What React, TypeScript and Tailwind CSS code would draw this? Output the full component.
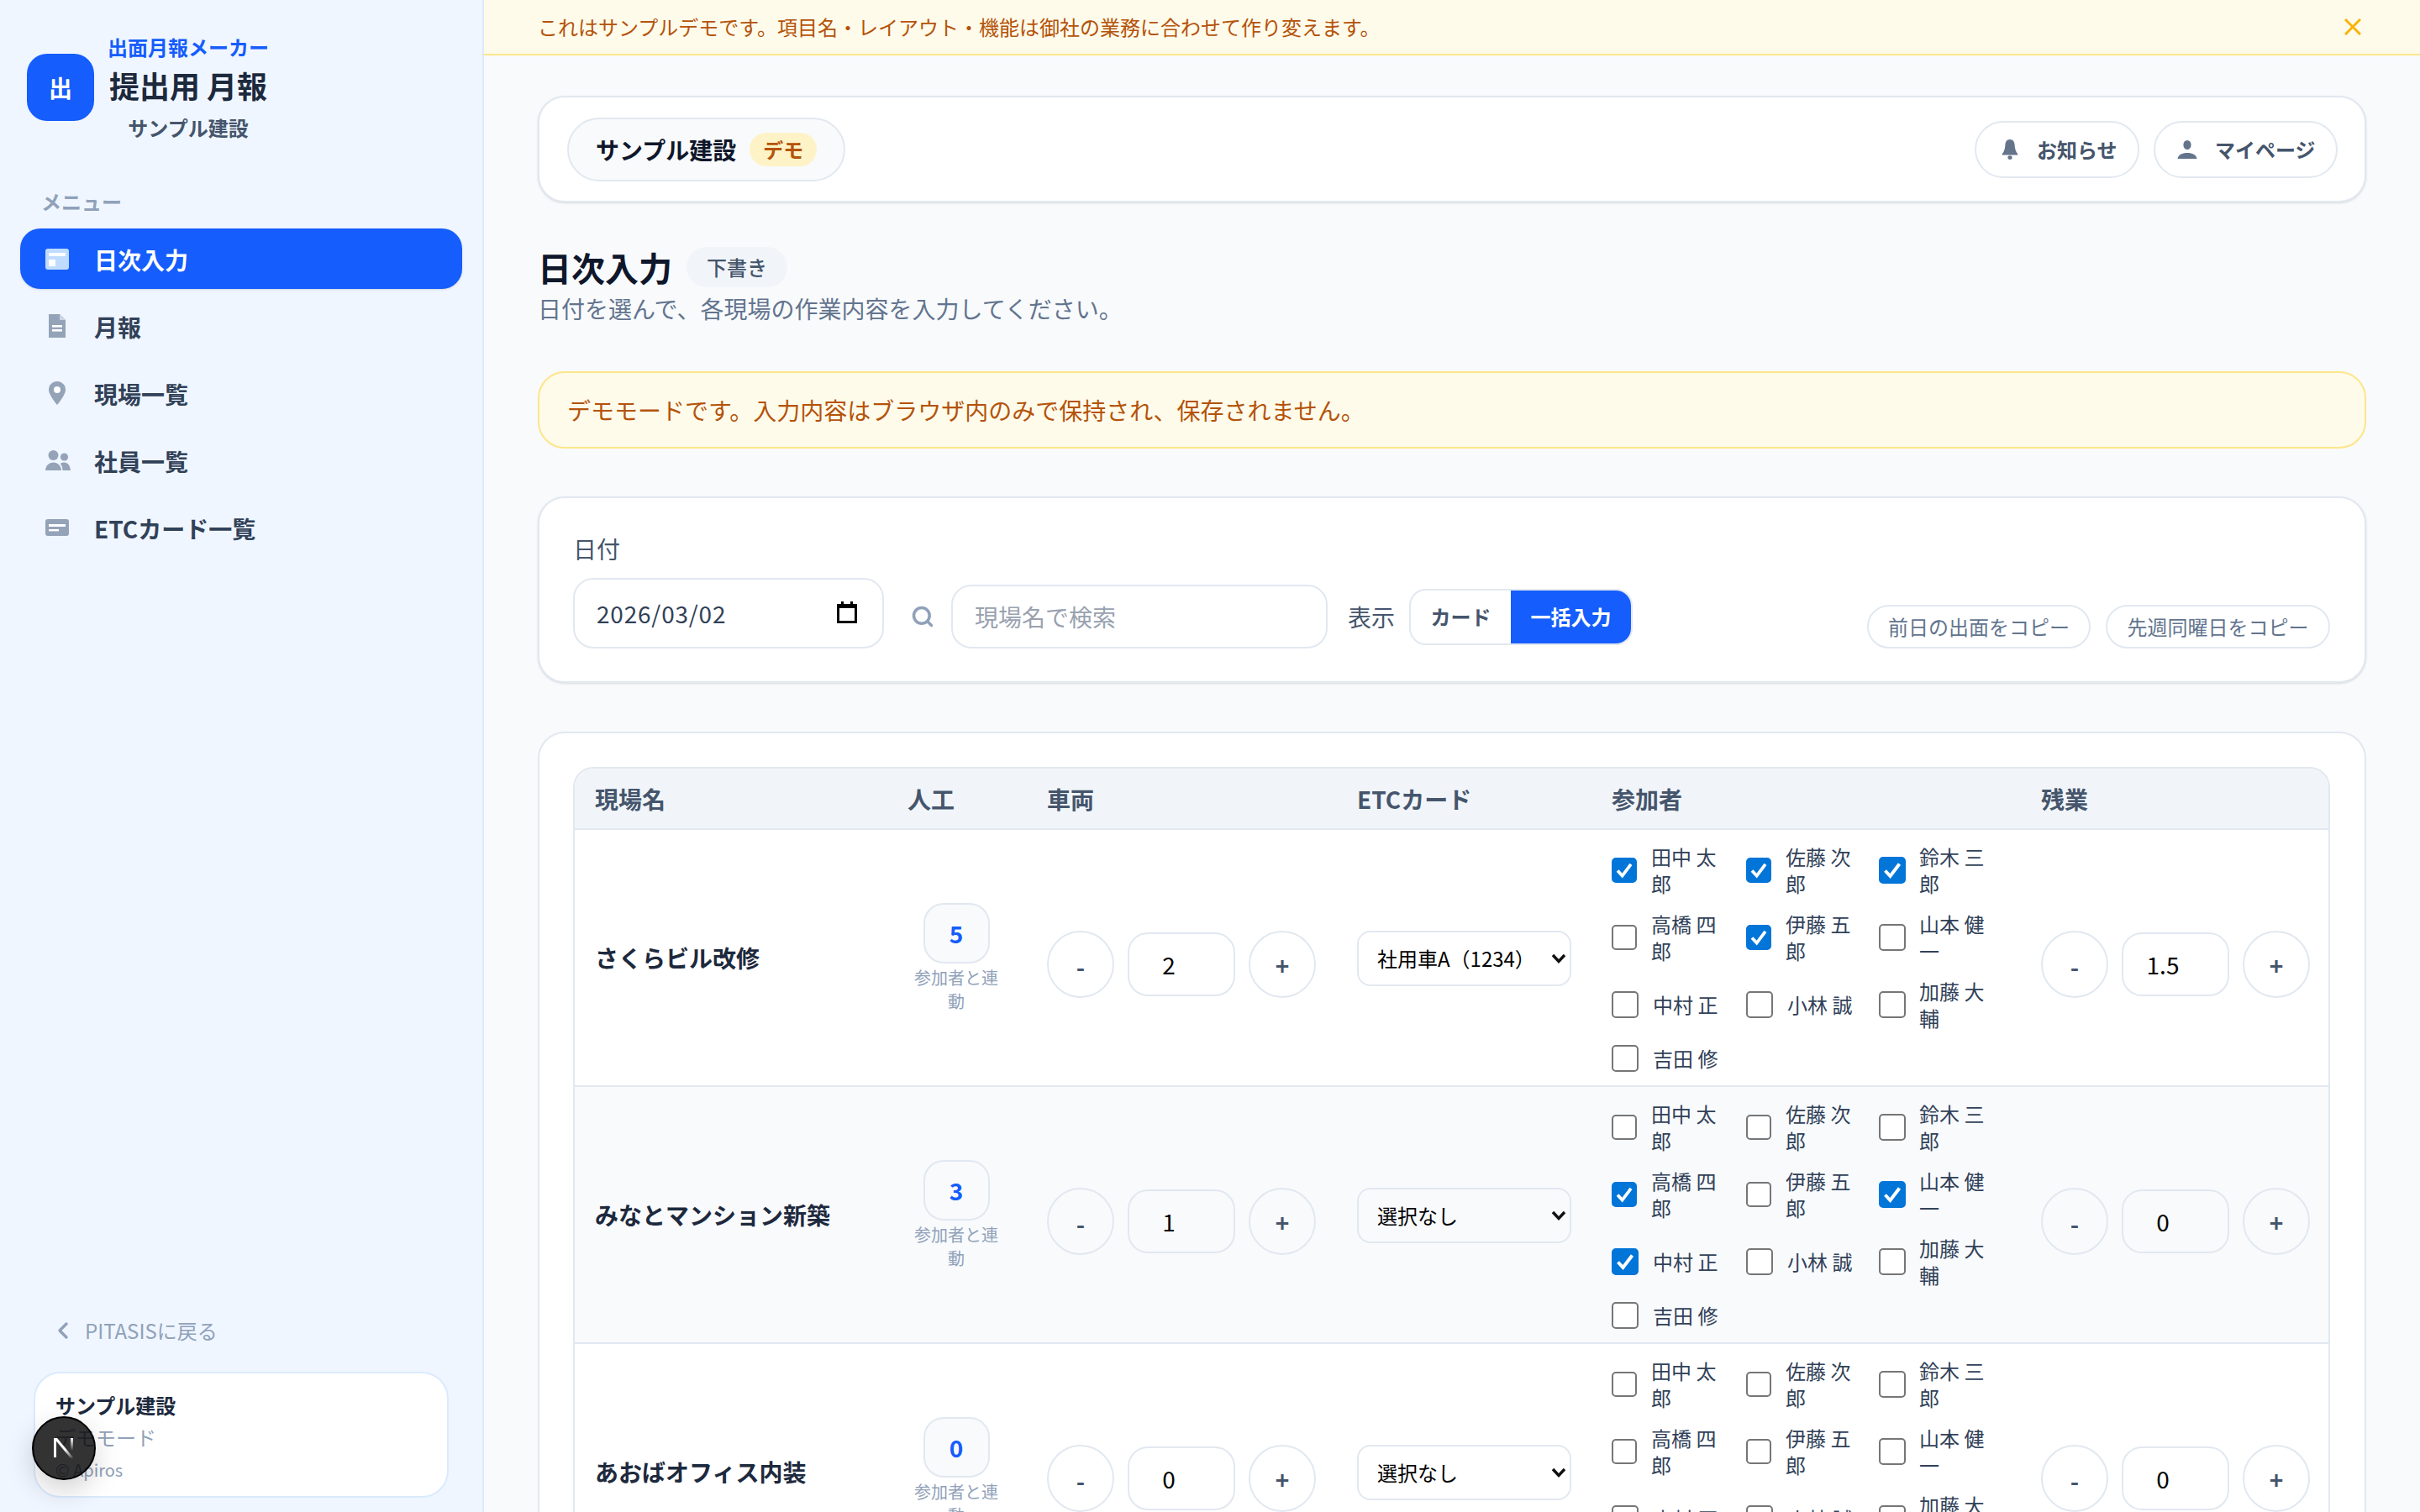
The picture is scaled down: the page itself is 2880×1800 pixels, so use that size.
import { ChevronLeft, Search } from "lucide-react";

const employees = [
  "田中 太郎",
  "佐藤 次郎",
  "鈴木 三郎",
  "高橋 四郎",
  "伊藤 五郎",
  "山本 健一",
  "中村 正",
  "小林 誠",
  "加藤 大輔",
  "吉田 修",
];

const sites = [
  { name: "さくらビル改修", workers: 5, vehicles: "2", etc: "社用車A（1234）", checked: [0, 1, 2, 4], overtime: "1.5" },
  { name: "みなとマンション新築", workers: 3, vehicles: "1", etc: "選択なし", checked: [3, 5, 6], overtime: "0" },
  { name: "あおばオフィス内装", workers: 0, vehicles: "0", etc: "選択なし", checked: [], overtime: "0" },
];

const CalendarNavIcon = () => (
  <svg width="28" height="25" viewBox="0 0 28 25" className="shrink-0">
    <rect width="28" height="25" rx="3" fill="#bfdbfe" />
    <rect x="4" y="5" width="20" height="4" fill="#ffffff" />
    <rect x="4" y="13" width="8" height="8" fill="#ffffff" />
  </svg>
);

const DocIcon = () => (
  <svg width="28" height="28" viewBox="0 0 28 28" className="shrink-0">
    <path d="M4 0H17L24 7V28H4Z" fill="#94a3b8" />
    <path d="M17 0V7H24Z" fill="#cbd5e1" />
    <rect x="8" y="13" width="12" height="2.6" fill="#ffffff" />
    <rect x="8" y="18" width="12" height="2.6" fill="#ffffff" />
  </svg>
);

const PinIcon = () => (
  <svg width="28" height="28" viewBox="0 0 28 28" className="shrink-0">
    <path d="M14 0C8.3 0 4 4.4 4 10C4 16.5 14 28 14 28C14 28 24 16.5 24 10C24 4.4 19.7 0 14 0Z" fill="#94a3b8" />
    <circle cx="14" cy="10" r="4" fill="#ffffff" />
  </svg>
);

const UsersIcon = () => (
  <svg width="30" height="24" viewBox="0 0 30 24" className="shrink-0">
    <circle cx="9.5" cy="6" r="6" fill="#94a3b8" />
    <circle cx="22.5" cy="8" r="4.6" fill="#94a3b8" />
    <path d="M0 24C0.6 18 4.5 14.5 9.5 14.5C14.5 14.5 18.4 18 19 24Z" fill="#94a3b8" />
    <path d="M20.5 24C20.3 20.6 19.4 17.8 17.8 15.8C19.1 15 20.7 14.6 22.4 14.6C26.6 14.6 29.4 18 30 24Z" fill="#94a3b8" />
  </svg>
);

const CardIcon = () => (
  <svg width="28" height="20" viewBox="0 0 28 20" className="shrink-0">
    <rect width="28" height="20" rx="3" fill="#94a3b8" />
    <rect x="4" y="6" width="20" height="3" fill="#ffffff" />
    <rect x="4" y="12" width="12" height="2.4" fill="#ffffff" />
  </svg>
);

const BellIcon = () => (
  <svg width="20" height="24" viewBox="0 0 20 24" className="shrink-0">
    <path d="M10 0C13.6 0 15.4 2.8 15.6 6.4C15.8 10.6 16.6 14 19.4 17.6V18.6H0.6V17.6C3.4 14 4.2 10.6 4.4 6.4C4.6 2.8 6.4 0 10 0Z" fill="#64748b" />
    <ellipse cx="10" cy="21.6" rx="2.6" ry="2.4" fill="#64748b" />
  </svg>
);

const PersonIcon = () => (
  <svg width="24" height="22" viewBox="0 0 24 22" className="shrink-0">
    <ellipse cx="12" cy="5.5" rx="4.6" ry="5.5" fill="#64748b" />
    <path d="M0.5 22C1 17.5 6 15 12 15C18 15 23 17.5 23.5 22Z" fill="#64748b" />
  </svg>
);

const navItems = [
  { label: "日次入力", icon: <CalendarNavIcon />, active: true },
  { label: "月報", icon: <DocIcon />, active: false },
  { label: "現場一覧", icon: <PinIcon />, active: false },
  { label: "社員一覧", icon: <UsersIcon />, active: false },
  { label: "ETCカード一覧", icon: <CardIcon />, active: false },
];

const Stepper = ({ value }: { value: string }) => (
  <div className="flex items-center gap-4 pt-[16px]">
    <button className="w-[80px] h-[80px] shrink-0 rounded-full border-2 border-slate-200 bg-transparent text-[28px] font-semibold text-slate-600 pt-[6px]">
      -
    </button>
    <input
      readOnly
      value={value}
      className="w-[128px] h-[76px] rounded-[24px] border-2 border-slate-200 bg-transparent text-center text-[28px] text-black pr-[30px] outline-none"
    />
    <button className="w-[80px] h-[80px] shrink-0 rounded-full border-2 border-slate-200 bg-transparent text-[28px] font-semibold text-slate-600 pt-[2px]">
      +
    </button>
  </div>
);

const Participant = ({ name, index, checked }: { name: string; index: number; checked: boolean }) => {
  const small = index % 3 !== 2 && name.length === 5;
  return (
    <label
      className={
        index % 3 === 2
          ? "flex items-center gap-4 text-[24px] leading-[32px] text-slate-700"
          : "flex items-center gap-[17px] text-[24px] leading-[32px] text-slate-700"
      }
    >
      <span className={small ? "relative w-[30px] h-[30px] shrink-0 flex" : "relative w-8 h-8 shrink-0 flex"}>
        <input
          type="checkbox"
          readOnly
          checked={checked}
          className="w-full h-full m-0 appearance-none rounded-[5px] border-2 border-[#767676] bg-white checked:border-[#0275d8] checked:bg-[#0275d8]"
        />
        {checked && (
          <svg viewBox="0 0 32 32" className="absolute inset-0 w-full h-full">
            <path d="M7.5 16.5L13.5 23L24.5 8.5" fill="none" stroke="#ffffff" strokeWidth="4" />
          </svg>
        )}
      </span>
      <span className="min-w-0">{name}</span>
    </label>
  );
};

const Row = ({ site, alt }: { site: (typeof sites)[number]; alt: boolean }) => (
  <div
    className={
      alt
        ? "grid grid-cols-[372px_166px_369px_303px_511px_1fr] items-center border-b-2 border-slate-200 bg-slate-50"
        : "grid grid-cols-[372px_166px_369px_303px_511px_1fr] items-center border-b-2 border-slate-200 bg-white"
    }
  >
    <div className="px-6 text-[28px] font-bold text-slate-800">{site.name}</div>
    <div className="pl-6 pr-[26px] flex flex-col items-center">
      <div className="mt-[1px] w-[79px] h-[72px] flex items-center justify-center rounded-[24px] border-2 border-slate-200 bg-slate-50 text-[28px] font-bold text-[#155dfc]">
        {site.workers}
      </div>
      <div className="mt-[3px] text-center text-[20px] leading-[28px] text-slate-400">参加者と連動</div>
    </div>
    <div className="px-6">
      <Stepper value={site.vehicles} />
    </div>
    <div className="px-6 pt-[1px]">
      <div className="relative">
        <select
          value={site.etc}
          onChange={() => {}}
          className="w-full h-[66px] appearance-none rounded-[16px] border-2 border-slate-200 bg-transparent pl-[22px] text-[24px] text-black outline-none"
        >
          <option>選択なし</option>
          <option>社用車A（1234）</option>
        </select>
        <svg width="18" height="12" viewBox="0 0 18 12" className="absolute right-[6px] top-[27px]">
          <path d="M2 2L9 9.5L16 2" fill="none" stroke="#111111" strokeWidth="3.4" />
        </svg>
      </div>
    </div>
    <div className="px-6 py-4 grid grid-cols-[144px_142px_1fr] gap-4 items-center">
      {employees.map((name, i) => (
        <Participant key={name} name={name} index={i} checked={site.checked.includes(i)} />
      ))}
    </div>
    <div className="px-6">
      <Stepper value={site.overtime} />
    </div>
  </div>
);

const App = () => {
  return (
    <div className="flex h-screen overflow-hidden bg-slate-50 font-['Noto_Sans_CJK_JP','Noto_Sans',sans-serif]">
      {/* Sidebar */}
      <aside className="w-[576px] shrink-0 flex flex-col bg-[#eff6ff] border-r-2 border-[#dbeafe]">
        <div className="flex items-center gap-4 pl-8 pt-[38px]">
          <div className="w-20 h-20 flex items-center justify-center rounded-[24px] bg-[#155dfc] text-[28px] font-bold text-white">
            出
          </div>
          <div className="flex flex-col items-center">
            <div className="text-[24px] leading-[36px] font-semibold text-[#155dfc]">出面月報メーカー</div>
            <div className="text-[36px] leading-[54px] font-bold text-slate-800">提出用 月報</div>
            <div className="text-[24px] leading-[36px] mt-[6px] font-semibold text-slate-600">サンプル建設</div>
          </div>
        </div>
        <div className="pl-[49px] mt-[52px] text-[24px] leading-[36px] font-semibold text-slate-400">メニュー</div>
        <nav className="flex flex-col gap-2 mt-[14px] pl-6 pr-6">
          {navItems.map((item) => (
            <div
              key={item.label}
              className={
                item.active
                  ? "h-[72px] flex items-center rounded-[24px] bg-[#155dfc] text-white shadow-sm"
                  : "h-[72px] flex items-center rounded-[24px] text-slate-700"
              }
            >
              <div className="w-[88px] pl-[30px] flex">{item.icon}</div>
              <span className="text-[28px] font-semibold pt-[2px]">{item.label}</span>
            </div>
          ))}
        </nav>
        <div className="mt-auto flex items-center gap-[10px] pl-[59px] text-[24px] leading-[36px] text-slate-400">
          <ChevronLeft className="w-8 h-8 stroke-[2.5]" />
          <span>PITASISに戻る</span>
        </div>
        <div className="mx-[40px] mt-[31px] mb-[17px] h-[150px] rounded-[32px] border-2 border-[#dbeafe] bg-white pl-6 pt-[20px] flex flex-col">
          <div className="text-[24px] leading-[36px] font-semibold text-slate-800">サンプル建設</div>
          <div className="mt-[2px] text-[24px] leading-[36px] text-slate-400">デモモード</div>
          <div className="mt-[6px] text-[20px] leading-[30px] text-slate-400">© Apiros</div>
        </div>
      </aside>

      {/* Main */}
      <main className="flex-1 min-w-0 flex flex-col">
        <div className="h-[66px] shrink-0 flex items-center justify-between border-b-2 border-[#fde68a] bg-[#fffbeb] pl-[64px] pr-[70px]">
          <span className="text-[24px] text-[#b45309]">
            これはサンプルデモです。項目名・レイアウト・機能は御社の業務に合わせて作り変えます。
          </span>
          <svg width="20" height="20" viewBox="0 0 20 20">
            <path d="M1 1L19 19M19 1L1 19" fill="none" stroke="#f9b208" strokeWidth="3" />
          </svg>
        </div>

        <div className="px-16 pt-12">
          {/* Header card */}
          <div className="h-[127px] flex items-center justify-between rounded-[32px] border-2 border-slate-200 bg-white pl-[33px] pr-[32px] shadow-sm">
            <div className="h-[76px] flex items-center gap-4 rounded-full border-2 border-slate-200 bg-slate-50 pl-[32px] pr-[32px]">
              <span className="text-[28px] font-semibold text-slate-900">サンプル建設</span>
              <span className="h-10 px-[16px] flex items-center rounded-full bg-[#fef3c7] text-[24px] font-semibold text-[#b45309]">
                デモ
              </span>
            </div>
            <div className="flex items-center gap-[17px]">
              <button className="h-[68px] w-[196px] flex items-center rounded-full border-2 border-slate-200 bg-white pl-[30px] gap-[22px] text-[24px] font-semibold text-slate-600">
                <BellIcon />
                お知らせ
              </button>
              <button className="h-[68px] w-[219px] flex items-center rounded-full border-2 border-slate-200 bg-white pl-[26px] gap-[21px] text-[24px] font-semibold text-slate-600">
                <PersonIcon />
                マイページ
              </button>
            </div>
          </div>

          {/* Title */}
          <div className="mt-[53px] h-12 flex items-center gap-[17px]">
            <h1 className="text-[40px] font-bold text-slate-900">日次入力</h1>
            <span className="h-12 px-6 flex items-center rounded-full bg-slate-100 text-[24px] font-medium text-slate-600">
              下書き
            </span>
          </div>
          <p className="mt-[5px] text-[28px] leading-[40px] text-slate-500">
            日付を選んで、各現場の作業内容を入力してください。
          </p>

          {/* Notice */}
          <div className="mt-[55px] h-[92px] flex items-center rounded-[32px] border-2 border-[#fde68a] bg-[#fffbeb] pl-[33px] text-[28px] text-[#b45309]">
            デモモードです。入力内容はブラウザ内のみで保持され、保存されません。
          </div>

          {/* Filters */}
          <div className="mt-[57px] h-[222px] flex items-end justify-between rounded-[32px] border-2 border-slate-200 bg-white pl-[40px] pr-[41px] pb-[39px] shadow-sm">
            <div className="flex items-end">
              <div className="flex flex-col">
                <label className="text-[28px] leading-[40px] text-slate-600">日付</label>
                <div className="relative mt-[15px] w-[370px]">
                  <input
                    readOnly
                    value="2026/03/02"
                    className="w-full h-[84px] rounded-[24px] border-2 border-slate-200 bg-white pl-[26px] text-[28px] tracking-[0.8px] text-slate-700 outline-none"
                  />
                  <svg width="24" height="26" viewBox="0 0 24 26" className="absolute right-[32px] top-[28px]">
                    <path d="M5 0H8V3H16V0H19V3H24V26H0V3H5Z" fill="#000000" />
                    <rect x="3" y="8" width="18" height="15" fill="#ffffff" />
                  </svg>
                </div>
              </div>
              <div className="h-[76px] flex items-center">
                <Search className="ml-[32px] w-7 h-7 stroke-[3] text-slate-400" />
                <input
                  readOnly
                  placeholder="現場名で検索"
                  className="ml-[20px] w-[448px] h-[76px] rounded-[24px] border-2 border-slate-200 bg-white pl-[26px] text-[28px] outline-none placeholder:text-gray-400"
                />
                <span className="ml-[24px] text-[28px] text-slate-600">表示</span>
                <div className="ml-[17px] h-[67px] flex overflow-hidden rounded-[20px] border-2 border-slate-200 bg-white text-[24px] font-semibold">
                  <button className="w-[119px] text-slate-600">カード</button>
                  <button className="w-[143px] bg-[#155dfc] text-white">一括入力</button>
                </div>
              </div>
            </div>
            <div className="flex gap-[18px]">
              <button className="h-[52px] w-[266px] rounded-full border-2 border-slate-200 bg-white text-[24px] text-slate-500">
                前日の出面をコピー
              </button>
              <button className="h-[52px] w-[267px] rounded-full border-2 border-slate-200 bg-white text-[24px] text-slate-500">
                先週同曜日をコピー
              </button>
            </div>
          </div>

          {/* Table */}
          <div className="mt-[58px] rounded-t-[32px] border-2 border-slate-200 bg-white pl-[40px] pr-[41px] pt-[40px]">
            <div className="rounded-t-[24px] border-x-2 border-t-2 border-slate-200">
              <div className="h-[73px] grid grid-cols-[372px_166px_369px_303px_511px_1fr] items-center rounded-t-[22px] border-b-2 border-slate-200 bg-slate-100 text-[28px] font-bold text-slate-600">
                <div className="px-6">現場名</div>
                <div className="px-6">人工</div>
                <div className="px-6">車両</div>
                <div className="px-6">ETCカード</div>
                <div className="px-6">参加者</div>
                <div className="px-6">残業</div>
              </div>
              {sites.map((site, i) => (
                <Row key={site.name} site={site} alt={i === 1} />
              ))}
            </div>
          </div>
        </div>
      </main>

      {/* Dev badge */}
      <div className="fixed left-[38px] bottom-[38px] w-[76px] h-[76px] flex items-center justify-center rounded-full border-2 border-black bg-black/80 shadow-[0_12px_32px_rgba(0,0,0,0.18)]">
        <svg width="26" height="24" viewBox="0 0 26 24">
          <defs>
            <linearGradient id="nDiag" x1="0" y1="0" x2="1" y2="1">
              <stop offset="0.55" stopColor="#ffffff" />
              <stop offset="1" stopColor="#ffffff" stopOpacity="0" />
            </linearGradient>
            <linearGradient id="nBar" x1="0" y1="0" x2="0" y2="1">
              <stop offset="0" stopColor="#ffffff" />
              <stop offset="1" stopColor="#ffffff" stopOpacity="0" />
            </linearGradient>
          </defs>
          <rect x="1" y="0" width="3" height="23" fill="#ffffff" />
          <path d="M1 0H5L25 24H21Z" fill="url(#nDiag)" />
          <rect x="21" y="0" width="3" height="15" fill="url(#nBar)" />
        </svg>
      </div>
    </div>
  );
};

export default App;
